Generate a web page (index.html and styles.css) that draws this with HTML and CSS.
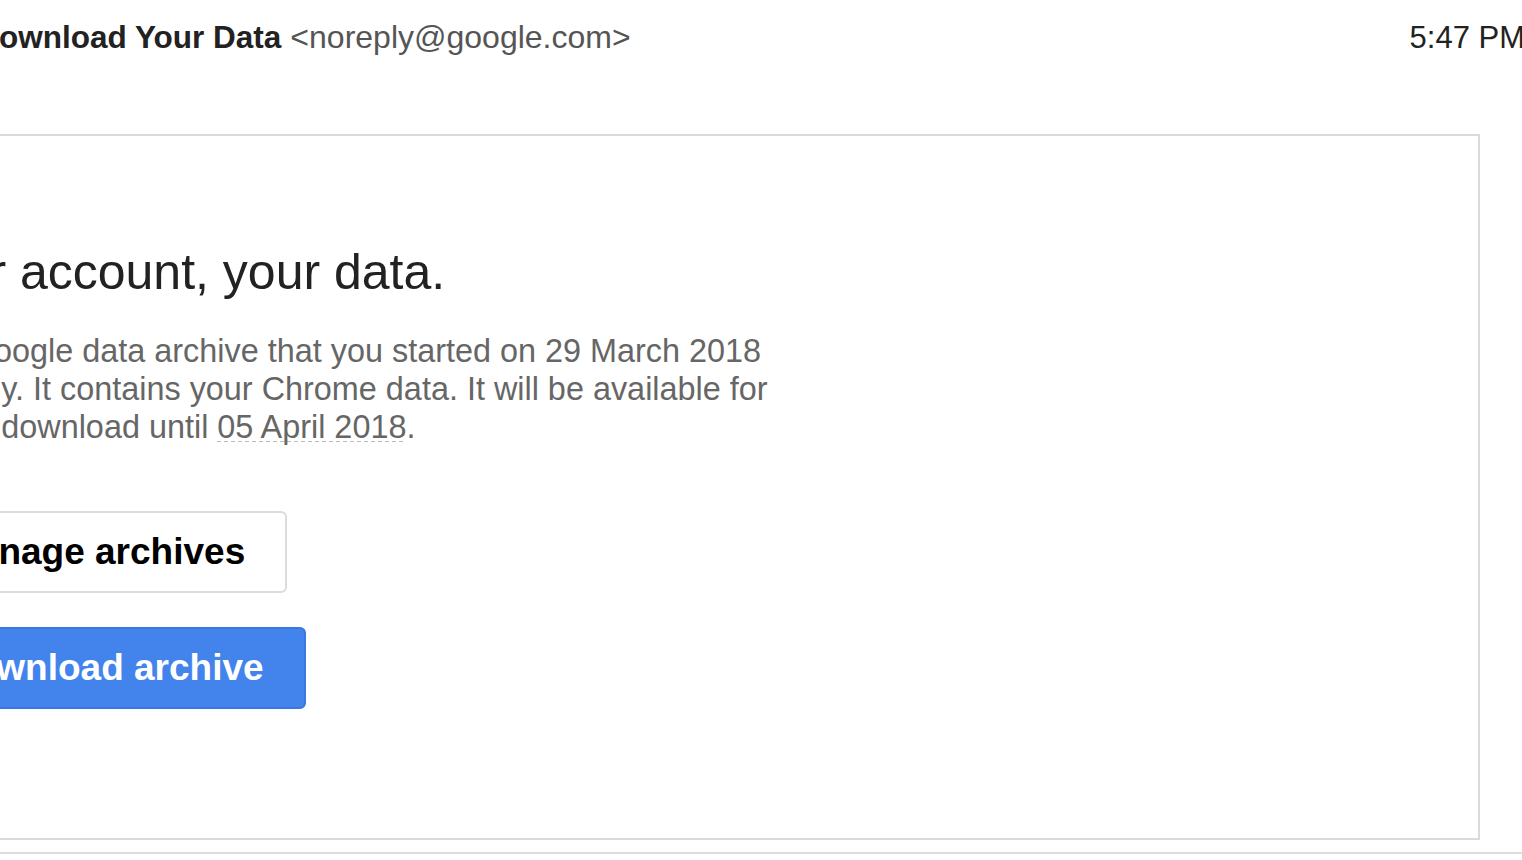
FILE: index.html
```html
<!DOCTYPE html>
<html lang="en">
<head>
    <meta charset="UTF-8">
    <meta name="viewport" content="width=device-width, initial-scale=1.0">
    <title>Your Google data archive is ready</title>
    <link rel="stylesheet" href="styles.css">
</head>
<body>

<div class="page">

    <!-- Message header -->
    <div class="mail-header">
        <span class="sender">Google Download Your Data</span>
        <span class="address">&lt;noreply@google.com&gt;</span>
        <span class="date">5:47 PM</span>
    </div>

    <!-- Message body -->
    <div class="card">
        <h1>Your account, your data.</h1>
        <p class="intro">
            The Google data archive that you started on 29 March 2018<br>
            is ready. It contains your Chrome data. It will be available for<br>
            you to download until <span class="date-mark">05 April 2018</span>.
        </p>
        <div class="actions">
            <a class="btn btn-light" href="#">Manage archives</a>
            <a class="btn btn-blue" href="#">Download archive</a>
        </div>
    </div>

    <div class="divider"></div>

</div>

</body>
</html>
```

FILE: styles.css
```css
body {
    font-family: 'Liberation Sans', Arial, sans-serif;
    background-color: #fff;
    color: #222;
    margin: 0;
    padding: 0;
    overflow: hidden;
}

.page {
    width: 1650px;
    margin-left: -125px;
}

.mail-header {
    display: flex;
    align-items: baseline;
    height: 134px;
    box-sizing: border-box;
    margin-left: -16px;
    padding-top: 17px;
    line-height: 40px;
}

.sender {
    font-size: 31.5px;
    font-weight: bold;
    color: #222;
}

.address {
    font-size: 32px;
    color: #555;
    margin-left: 9px;
}

.date {
    font-size: 31px;
    color: #222;
    margin-left: auto;
}

.card {
    width: 1605px;
    box-sizing: border-box;
    border: 2px solid #dadada;
    padding: 106px 0 129px 28px;
}

.card h1 {
    font-size: 50px;
    font-weight: normal;
    line-height: 60px;
    color: #222;
    margin: 0;
}

.intro {
    font-size: 32.4px;
    line-height: 38px;
    color: #666;
    margin: 30px 0 0 -1px;
}

/* dashed line under the expiry date */
.date-mark {
    background-image: repeating-linear-gradient(to right, #bbb 0, #bbb 4px, transparent 4px, transparent 7px);
    background-size: 100% 1px;
    background-position: 0 calc(100% - 3px);
    background-repeat: no-repeat;
}

.actions {
    display: flex;
    flex-direction: column;
    align-items: flex-start;
    gap: 34px;
    margin-top: 65px;
}

.btn {
    display: block;
    box-sizing: border-box;
    height: 82px;
    line-height: 78px;
    padding: 0 40px;
    font-size: 37px;
    font-weight: bold;
    text-decoration: none;
    border-radius: 6px;
    border: 2px solid;
}

.btn-light {
    background-color: #fff;
    border-color: #dcdcdc;
    color: #000;
}

.btn-blue {
    background-color: #4283ec;
    border-color: #3a77de;
    color: #fff;
}

.divider {
    height: 2px;
    margin-top: 12px;
    background-color: #dcdcdc;
}
```
